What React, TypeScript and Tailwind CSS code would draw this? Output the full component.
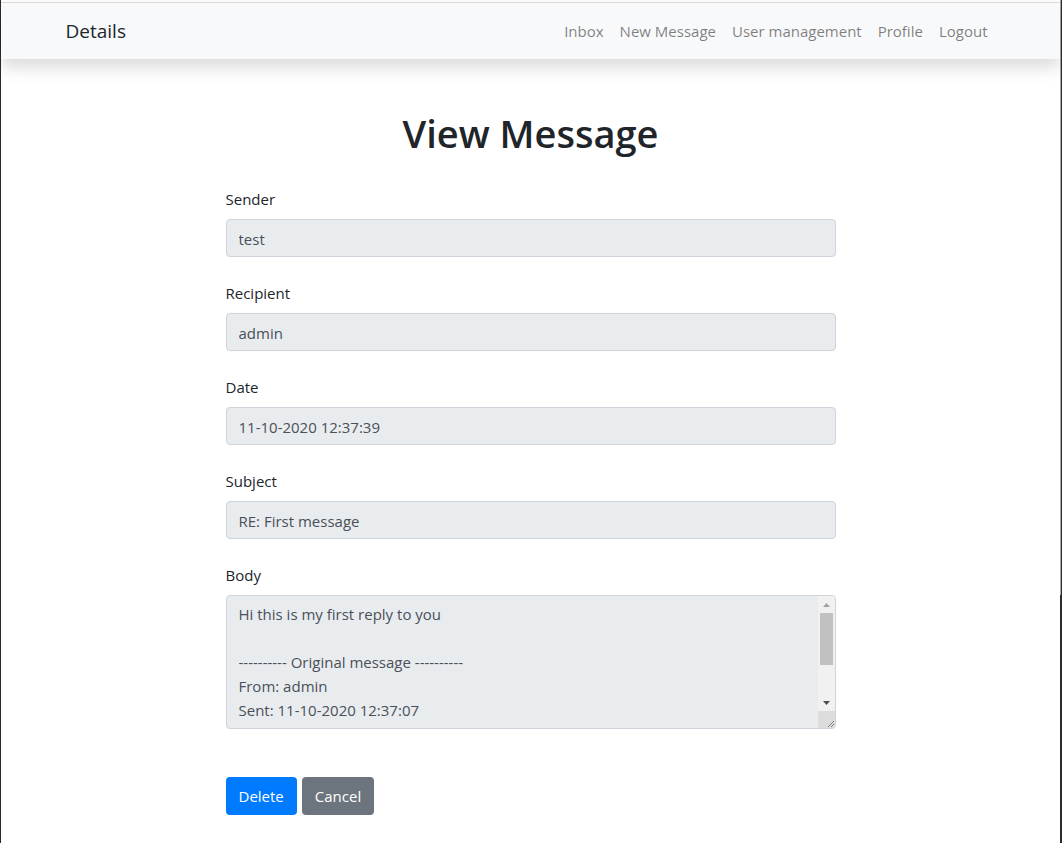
import React from "react"

const font = { fontFamily: '"Open Sans", "Noto Sans", Arial, sans-serif' }

const fields = [
  { label: "Sender", value: "test" },
  { label: "Recipient", value: "admin" },
  { label: "Date", value: "11-10-2020 12:37:39" },
  { label: "Subject", value: "RE: First message" },
]

const body = `Hi this is my first reply to you

---------- Original message ----------
From: admin
Sent: 11-10-2020 12:37:07
To: test
Subject: First message

This is my first message to you.
Regards`

const links = ["Inbox", "New Message", "User management", "Profile", "Logout"]

// classic scrollbar drawn over the textarea's right edge
function FakeScrollbar() {
  return (
    <div className="absolute top-px right-px bottom-px flex w-[17px] flex-col rounded-r-[3px] bg-[#f1f1f1]">
      <div className="flex h-[17px] items-center justify-center">
        <svg width="7" height="4" viewBox="0 0 7 4">
          <path d="M0 4 L3.5 0 L7 4 Z" fill="#a3a3a3" />
        </svg>
      </div>
      <div className="mx-[2px] h-[52px] bg-[#c1c1c1]" />
      <div className="flex-1" />
      <div className="flex h-[17px] items-center justify-center">
        <svg width="7" height="4" viewBox="0 0 7 4">
          <path d="M0 0 L3.5 4 L7 0 Z" fill="#505050" />
        </svg>
      </div>
      <div className="flex h-[17px] items-end justify-end bg-[#dcdcdc]">
        <svg width="10" height="10" viewBox="0 0 10 10">
          <path d="M9 3 L3 9 M9 6 L6 9" stroke="#808080" strokeWidth="1" />
        </svg>
      </div>
    </div>
  )
}

export default function App() {
  return (
    <div className="flex min-h-[843px] bg-white text-[#212529] [font-family:'Open_Sans','Noto_Sans',Arial,sans-serif]">
      {/* window edge */}
      <div className="w-px bg-[#2b2b2b]" />

      <div className="flex-1 pt-[2px]">
        {/* Navbar */}
        <nav className="relative z-10 h-[57px] border-t border-[#dadada] bg-[#f8f9fa] shadow-[0_8px_16px_rgba(0,0,0,0.15)]">
          <div className="mx-auto flex h-full w-[960px] items-center justify-between px-[15px]">
            <span className="text-[19px] leading-[30px]">Details</span>
            <ul className="flex items-center">
              {links.map((l) => (
                <li key={l}>
                  <a className="block px-2 py-2 text-[15px] leading-6 text-black/50">{l}</a>
                </li>
              ))}
            </ul>
          </div>
        </nav>

        {/* Content */}
        <main className="mx-auto w-[610px]">
          <h1 className="mt-[50px] h-12 text-center text-[38px] font-semibold leading-[48px]">
            View Message
          </h1>

          <form className="mt-[30px] flex flex-col gap-6">
            {fields.map((f) => (
              <div key={f.label}>
                <label className="mb-2 block text-[15px] leading-6">{f.label}</label>
                <input
                  readOnly
                  value={f.value}
                  className="block h-[38px] w-full rounded border border-[#ced4da] bg-[#e9ecef] px-3 pt-px text-[15px] leading-6 text-[#495057] outline-none"
                  style={font}
                />
              </div>
            ))}

            <div>
              <label className="mb-2 block text-[15px] leading-6">Body</label>
              <div className="relative">
                <textarea
                  readOnly
                  rows={5}
                  value={body}
                  className="block h-[134px] w-full resize-none overflow-hidden rounded border border-[#ced4da] bg-[#e9ecef] py-1.5 pr-[29px] pl-3 text-[15px] leading-6 text-[#495057] outline-none"
                  style={font}
                />
                <FakeScrollbar />
              </div>
            </div>
          </form>

          <div className="mt-12 flex gap-[5px]">
            <button className="h-[38px] rounded bg-[#007bff] px-[13px] text-[15px] leading-6 text-white">
              Delete
            </button>
            <button className="h-[38px] rounded bg-[#6c757d] px-[13px] text-[15px] leading-6 text-white">
              Cancel
            </button>
          </div>
        </main>
      </div>

      {/* window edge */}
      <div className="flex w-[2px] flex-col">
        <div className="flex h-[595px]">
          <div className="w-px bg-[#a8a8a8]" />
          <div className="w-px bg-[#2b2b2b]" />
        </div>
        <div className="flex-1 bg-[#2b2b2b]" />
      </div>
    </div>
  )
}
